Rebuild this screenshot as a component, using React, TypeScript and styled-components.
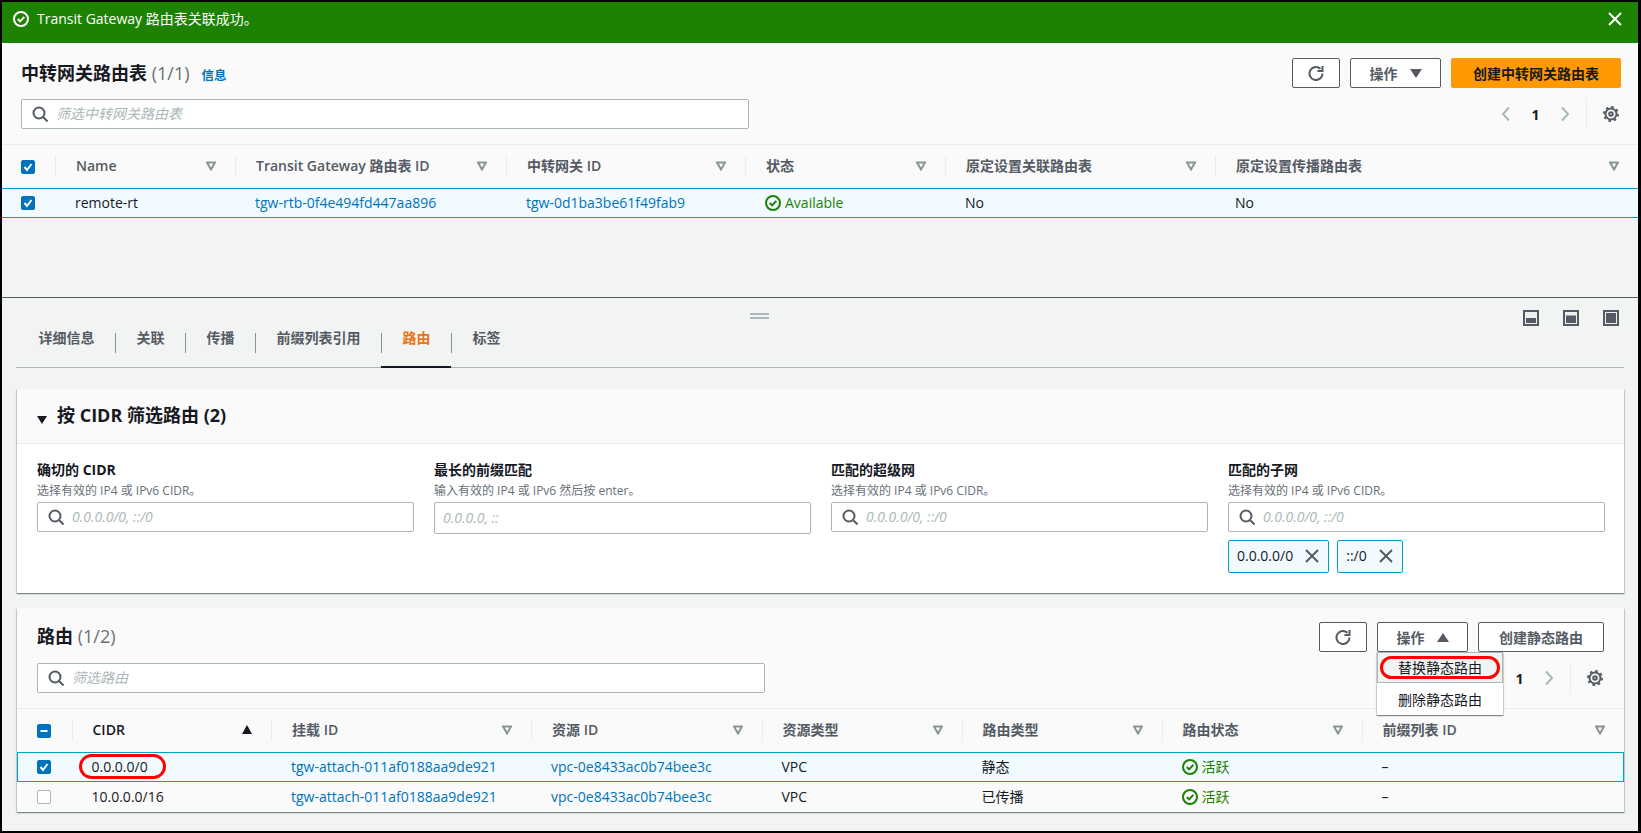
import React from "react";
import styled, { createGlobalStyle } from "styled-components";

const FONT = `"Open Sans", "Noto Sans CJK SC", sans-serif`;

const Global = createGlobalStyle`
  html, body { margin: 0; padding: 0; background: #000; }
  * { box-sizing: border-box; }
  body { font-family: ${FONT}; font-size: 14px; color: #16191f; }
`;

const Frame = styled.div`
  width: 1641px; height: 833px; padding: 2px 3px 2px 2px; background: #000; overflow: hidden;
`;
const Page = styled.div`
  height: 829px; background: #f2f3f3; display: flex; flex-direction: column;
`;
const Flash = styled.div`
  height: 41px; background: #1d8102; color: #fff; display: flex; align-items: center;
  padding: 0 15px 8px 11px; gap: 8px; flex: none;
`;
const FlashText = styled.span` flex: 1; line-height: 20px; `;
const FlashClose = styled.span` margin-top: 1px; `;
const Top = styled.section`
  height: 255px; flex: none; border-bottom: 1px solid #545b64;
`;
const Head = styled.div<{ $pad: string }>`
  background: #fafafa; padding: ${p => p.$pad};
  display: flex; flex-direction: column; gap: 11px; position: relative;
`;
const Row = styled.div`
  display: flex; align-items: center; justify-content: space-between; height: 30px;
`;
const TitleWrap = styled.div` display: flex; align-items: baseline; gap: 12px; padding-top: 2px; `;
const Title = styled.h2`
  margin: 0; padding-bottom: 2px; font-size: 18px; font-weight: 700; line-height: 22px; color: #16191f;
`;
const Count = styled.span` font-weight: 400; color: #687078; `;
const Info = styled.a` font-size: 12.5px; font-weight: 700; color: #0073bb; `;
const Actions = styled.div` display: flex; gap: 10px; `;
const Btn = styled.button<{ $primary?: boolean; $w: number }>`
  width: ${p => p.$w}px; height: 30px; border-radius: 2px; padding: 0;
  display: flex; align-items: center; justify-content: center; gap: 12px;
  font: 700 14px ${FONT};
  background: ${p => (p.$primary ? "#ff9900" : "#fff")};
  color: ${p => (p.$primary ? "#16191f" : "#545b64")};
  border: 1px solid ${p => (p.$primary ? "#ff9900" : "#545b64")};
`;
const SearchBox = styled.div<{ $w?: number; $h?: number; $noIcon?: boolean }>`
  width: ${p => (p.$w ? `${p.$w}px` : "100%")}; height: ${p => p.$h ?? 30}px;
  background: #fff; border: 1px solid #aab7b8; border-radius: 2px;
  display: flex; align-items: center; gap: 8px; padding-left: ${p => (p.$noIcon ? 8 : 10)}px;
  color: #aab7b8; font-style: italic; line-height: 20px;
`;
const Pager = styled.div<{ $right: number }>`
  display: flex; align-items: center; height: 30px; padding-right: ${p => p.$right}px; color: #16191f; font-weight: 700;
`;
const PageNum = styled.span` width: 14px; text-align: center; margin: 0 14.5px; `;
const PagerDiv = styled.span`
  width: 1px; height: 30px; background: #eaeded; margin: 0 16px 0 13px;
`;
const GridRow = styled.div<{ $cols: string }>`
  display: grid; grid-template-columns: ${p => p.$cols}; align-items: center;
`;
const HeadRow = styled(GridRow)`
  height: 44px; border-top: 1px solid #eaeded; background: #fafafa;
`;
const HCell = styled.div<{ $dark?: boolean }>`
  height: 21px; line-height: 20px; display: flex; align-items: center; justify-content: space-between;
  padding: 0 19px 2px 20px; font-weight: 600; white-space: nowrap;
  color: ${p => (p.$dark ? "#16191f" : "#545b64")}; border-left: 1px solid #eaeded;
`;
const CheckCell = styled.div<{ $pad: number }>`
  display: flex; align-items: center; padding-left: ${p => p.$pad}px;
`;
const Check = styled.span<{ $on?: boolean }>`
  width: 14px; height: 14px; border-radius: 2px; display: flex; align-items: center; justify-content: center;
  background: ${p => (p.$on ? "#0073bb" : "#fff")};
  border: 1px solid ${p => (p.$on ? "#0073bb" : "#aab7b8")};
`;
const BodyRow = styled(GridRow)<{ $sel?: boolean; $boxed?: boolean }>`
  height: 30px;
  background: ${p => (p.$sel ? "#f1faff" : "#fafafa")};
  box-shadow: ${p => !p.$sel ? "none" : p.$boxed ? "inset 0 0 0 1px #00a1c9" : "inset 0 1px 0 #00a1c9, inset 0 -1px 0 #00a1c9"};
`;
const Cell = styled.div` padding-left: 20px; line-height: 20px; white-space: nowrap; position: relative; `;
const LinkText = styled.a` color: #0073bb; `;
const Status = styled.span` color: #1d8102; display: inline-flex; align-items: center; gap: 4px; vertical-align: top; height: 20px; `;
const Bottom = styled.section` flex: 1; padding: 0 14px 0 15px; `;
const SplitBar = styled.div`
  height: 35px; display: flex; align-items: flex-start; padding: 12px 5px 0 733px;
`;
const Handle = styled.div`
  width: 19px; height: 6px; margin-top: 3px; border-top: 2px solid #aab7b8; border-bottom: 2px solid #aab7b8;
`;
const ViewIcons = styled.div` margin-left: auto; display: flex; gap: 24px; `;
const Tabs = styled.div`
  height: 35px; margin-left: -1px; padding-left: 1px; display: flex; border-bottom: 1px solid #aab7b8;
`;
const Tab = styled.div<{ $active?: boolean }>`
  height: 35px; border-bottom: 2px solid ${p => (p.$active ? "#16191f" : "transparent")};
`;
const TabLabel = styled.div<{ $active?: boolean; $first?: boolean }>`
  height: 20px; line-height: 10px; padding: 0 20.5px;
  border-left: 1px solid ${p => (p.$first ? "transparent" : "#879596")};
  font-weight: 700; color: ${p => (p.$active ? "#ec7211" : "#545b64")};
`;
const Card = styled.div<{ $mt: number }>`
  height: 204px; margin-top: ${p => p.$mt}px; background: #fff; position: relative;
  box-shadow: 0 1px 1px 0 rgba(0,28,36,.3), 1px 1px 1px 0 rgba(0,28,36,.15), -1px 1px 1px 0 rgba(0,28,36,.15);
`;
const CardHead = styled.div`
  height: 55px; background: #fafafa; border-bottom: 1px solid #eaeded;
  display: flex; align-items: center; gap: 10px; padding: 0 0 0 20px;
`;
const Caret = styled.span`
  width: 0; height: 0; margin-top: 7px; border-left: 5px solid transparent; border-right: 5px solid transparent; border-top: 8px solid #16191f;
`;
const Fields = styled.div`
  display: grid; grid-template-columns: repeat(4, 1fr); gap: 20px; padding: 17px 19px 0 20px;
`;
const Field = styled.div``;
const Label = styled.div` height: 20px; line-height: 18px; font-weight: 700; `;
const Desc = styled.div` height: 21px; line-height: 20px; font-size: 12px; color: #687078; `;
const Tokens = styled.div` display: flex; gap: 8px; margin-top: 8px; `;
const Token = styled.div`
  height: 33px; padding: 0 8px 2px; display: flex; align-items: center; gap: 11px;
  background: #f1faff; border: 1px solid #00a1c9; border-radius: 2px;
`;
const ActionWrap = styled.div` position: relative; `;
const Menu = styled.div`
  position: absolute; left: 0; top: 100%; width: 126px; background: #fff; z-index: 3;
  box-shadow: 0 1px 1px 0 rgba(0,28,36,.3), 1px 1px 1px 0 rgba(0,28,36,.15), -1px 1px 1px 0 rgba(0,28,36,.15);
`;
const MenuItem = styled.div<{ $hover?: boolean }>`
  height: ${p => (p.$hover ? 31 : 32)}px; padding-bottom: ${p => (p.$hover ? 2 : 0)}px;
  display: flex; align-items: center; justify-content: center; position: relative;
  background: ${p => (p.$hover ? "#f2f3f3" : "#fff")}; color: #16191f;
  border: ${p => (p.$hover ? "1px solid #aab7b8" : "none")};
`;
const Ring = styled.span<{ $l: number; $t: number; $w: number; $h: number }>`
  position: absolute; left: ${p => p.$l}px; top: ${p => p.$t}px; width: ${p => p.$w}px; height: ${p => p.$h}px;
  border: 3px solid #f00; border-radius: 13px; pointer-events: none;
`;

const Svg: React.FC<{ s?: number; c?: string; w?: number; children: React.ReactNode }> = ({ s = 16, c = "currentColor", w = 2, children }) => (
  <svg width={s} height={s} viewBox="0 0 16 16" fill="none" stroke={c} strokeWidth={w} style={{ flex: "none", display: "block" }}>{children}</svg>
);
const SearchIcon = () => <Svg c="#545b64"><circle cx="7" cy="7" r="5.5" /><path d="M11 11l4.5 4.5" /></Svg>;
const CheckCircle = ({ c = "#1d8102" }: { c?: string }) => <Svg c={c}><circle cx="8" cy="8" r="7" /><path d="M4.8 8l2.3 2.4 4.2-4.6" /></Svg>;
const XIcon = ({ c = "#545b64" }: { c?: string }) => <Svg c={c}><path d="M2 2l12 12M14 2L2 14" /></Svg>;
const Refresh = () => <Svg c="#545b64"><path d="M14.5 8.5a6.5 6.5 0 1 1-2-4.7" /><path d="M14.5 1v5h-5" /></Svg>;
const Gear = () => (
  <Svg c="#545b64">
    <circle cx="8" cy="8" r="5.5" />
    <circle cx="8" cy="8" r="7" strokeDasharray="2.5 3" strokeWidth="2" />
    <circle cx="8" cy="8" r="1.8" />
  </Svg>
);
const Left = () => <Svg c="#aab7b8"><path d="M11 1.5L5 8l6 6.5" /></Svg>;
const Right = () => <Svg c="#aab7b8"><path d="M5 1.5L11 8l-6 6.5" /></Svg>;
const FilterTri = () => (
  <svg width="10" height="10" viewBox="0 0 10 10" fill="none" stroke="#879596" strokeWidth="2" style={{ flex: "none" }}><path d="M1 1.5h8L5 8.5z" /></svg>
);
const SortUp = () => (
  <svg width="10" height="9" viewBox="0 0 10 9" fill="#16191f" style={{ flex: "none" }}><path d="M5 0l5 9H0z" /></svg>
);
const SolidTri = ({ up }: { up?: boolean }) => (
  <svg width="12" height="9" viewBox="0 0 12 9" fill="#545b64" style={{ flex: "none" }}><path d={up ? "M6 0l6 9H0z" : "M0 0h12L6 9z"} /></svg>
);
const Tick = () => (
  <svg width="12" height="12" viewBox="0 0 12 12" fill="none" stroke="#fff" strokeWidth="2"><path d="M2.5 6l2.5 3 4.5-6" /></svg>
);
const Dash = () => (
  <svg width="12" height="12" viewBox="0 0 12 12" fill="none" stroke="#fff" strokeWidth="2"><path d="M2.5 6h7" /></svg>
);
const ViewIcon = ({ y, h }: { y: number; h: number }) => (
  <svg width="16" height="16" viewBox="0 0 16 16" style={{ display: "block" }}>
    <rect x="1" y="1" width="14" height="14" fill="#eef0f0" stroke="#545b64" strokeWidth="2" />
    <rect x="3" y={y} width="10" height={h} fill="#545b64" />
  </svg>
);

const topCols = "53px 180px 271px 239px 200px 270px 1fr";
const topHeads = ["Name", "Transit Gateway 路由表 ID", "中转网关 ID", "状态", "原定设置关联路由表", "原定设置传播路由表"];
const routeCols = "54.5px 199.5px 260px 230.5px 200px 200px 200px 1fr";
const routeHeads = ["挂载 ID", "资源 ID", "资源类型", "路由类型", "路由状态", "前缀列表 ID"];

const Active = () => <Status><CheckCircle />活跃</Status>;

const fields = [
  { label: "确切的 CIDR", desc: "选择有效的 IP4 或 IPv6 CIDR。", ph: "0.0.0.0/0, ::/0" },
  { label: "最长的前缀匹配", desc: "输入有效的 IP4 或 IPv6 然后按 enter。", ph: "0.0.0.0, ::", noIcon: true },
  { label: "匹配的超级网", desc: "选择有效的 IP4 或 IPv6 CIDR。", ph: "0.0.0.0/0, ::/0" },
  { label: "匹配的子网", desc: "选择有效的 IP4 或 IPv6 CIDR。", ph: "0.0.0.0/0, ::/0", tokens: ["0.0.0.0/0", "::/0"] },
];
const tabs = ["详细信息", "关联", "传播", "前缀列表引用", "路由", "标签"];

export default function App() {
  return (
    <Frame>
      <Global />
      <Page>
        <Flash>
          <CheckCircle c="#fff" />
          <FlashText>Transit Gateway 路由表关联成功。</FlashText>
          <FlashClose><XIcon c="#fff" /></FlashClose>
        </Flash>
        <Top>
          <Head $pad="15px 17px 15px 19px">
            <Row>
              <TitleWrap>
                <Title>中转网关路由表 <Count>(1/1)</Count></Title>
                <Info>信息</Info>
              </TitleWrap>
              <Actions>
                <Btn $w={48}><Refresh /></Btn>
                <Btn $w={91}>操作<SolidTri /></Btn>
                <Btn $w={170} $primary>创建中转网关路由表</Btn>
              </Actions>
            </Row>
            <Row>
              <SearchBox $w={728}><SearchIcon />筛选中转网关路由表</SearchBox>
              <Pager $right={2}>
                <Left /><PageNum>1</PageNum><Right /><PagerDiv /><Gear />
              </Pager>
            </Row>
          </Head>
          <HeadRow $cols={topCols}>
            <CheckCell $pad={19}><Check $on><Tick /></Check></CheckCell>
            {topHeads.map(h => <HCell key={h}>{h}<FilterTri /></HCell>)}
          </HeadRow>
          <BodyRow $cols={topCols} $sel>
            <CheckCell $pad={19}><Check $on><Tick /></Check></CheckCell>
            <Cell>remote-rt</Cell>
            <Cell><LinkText>tgw-rtb-0f4e494fd447aa896</LinkText></Cell>
            <Cell><LinkText>tgw-0d1ba3be61f49fab9</LinkText></Cell>
            <Cell><Status><CheckCircle />Available</Status></Cell>
            <Cell>No</Cell>
            <Cell>No</Cell>
          </BodyRow>
        </Top>
        <Bottom>
          <SplitBar>
            <Handle />
            <ViewIcons>
              <ViewIcon y={8} h={5} />
              <ViewIcon y={5.5} h={7.5} />
              <ViewIcon y={3} h={10} />
            </ViewIcons>
          </SplitBar>
          <Tabs>
            {tabs.map((t, i) => (
              <Tab key={t} $active={t === "路由"}>
                <TabLabel $first={i === 0} $active={t === "路由"}>{t}</TabLabel>
              </Tab>
            ))}
          </Tabs>
          <Card $mt={21}>
            <CardHead>
              <Caret />
              <Title>按 CIDR 筛选路由 (2)</Title>
            </CardHead>
            <Fields>
              {fields.map(f => (
                <Field key={f.label}>
                  <Label>{f.label}</Label>
                  <Desc>{f.desc}</Desc>
                  <SearchBox $noIcon={f.noIcon} $h={f.noIcon ? 32 : 30}>
                    {!f.noIcon && <SearchIcon />}{f.ph}
                  </SearchBox>
                  {f.tokens && (
                    <Tokens>
                      {f.tokens.map(t => <Token key={t}>{t}<XIcon /></Token>)}
                    </Tokens>
                  )}
                </Field>
              ))}
            </Fields>
          </Card>
          <Card $mt={15}>
            <Head $pad="14px 20px 15px 20px">
              <Row>
                <Title>路由 <Count>(1/2)</Count></Title>
                <Actions>
                  <Btn $w={48}><Refresh /></Btn>
                  <ActionWrap>
                    <Btn $w={91}>操作<SolidTri up /></Btn>
                    <Menu>
                      <MenuItem $hover>替换静态路由<Ring $l={2} $t={3} $w={120} $h={23} /></MenuItem>
                      <MenuItem>删除静态路由</MenuItem>
                    </Menu>
                  </ActionWrap>
                  <Btn $w={126}>创建静态路由</Btn>
                </Actions>
              </Row>
              <Row>
                <SearchBox $w={728}><SearchIcon />筛选路由</SearchBox>
                <Pager $right={1}>
                  <PageNum>1</PageNum><Right /><PagerDiv /><Gear />
                </Pager>
              </Row>
            </Head>
            <HeadRow $cols={routeCols}>
              <CheckCell $pad={20}><Check $on><Dash /></Check></CheckCell>
              <HCell $dark>CIDR<SortUp /></HCell>
              {routeHeads.map(h => <HCell key={h}>{h}<FilterTri /></HCell>)}
            </HeadRow>
            <BodyRow $cols={routeCols} $sel $boxed>
              <CheckCell $pad={20}><Check $on><Tick /></Check></CheckCell>
              <Cell>0.0.0.0/0<Ring $l={7} $t={-3} $w={87} $h={25} /></Cell>
              <Cell><LinkText>tgw-attach-011af0188aa9de921</LinkText></Cell>
              <Cell><LinkText>vpc-0e8433ac0b74bee3c</LinkText></Cell>
              <Cell>VPC</Cell>
              <Cell>静态</Cell>
              <Cell><Active /></Cell>
              <Cell>–</Cell>
            </BodyRow>
            <BodyRow $cols={routeCols}>
              <CheckCell $pad={20}><Check /></CheckCell>
              <Cell>10.0.0.0/16</Cell>
              <Cell><LinkText>tgw-attach-011af0188aa9de921</LinkText></Cell>
              <Cell><LinkText>vpc-0e8433ac0b74bee3c</LinkText></Cell>
              <Cell>VPC</Cell>
              <Cell>已传播</Cell>
              <Cell><Active /></Cell>
              <Cell>–</Cell>
            </BodyRow>
          </Card>
        </Bottom>
      </Page>
    </Frame>
  );
}
